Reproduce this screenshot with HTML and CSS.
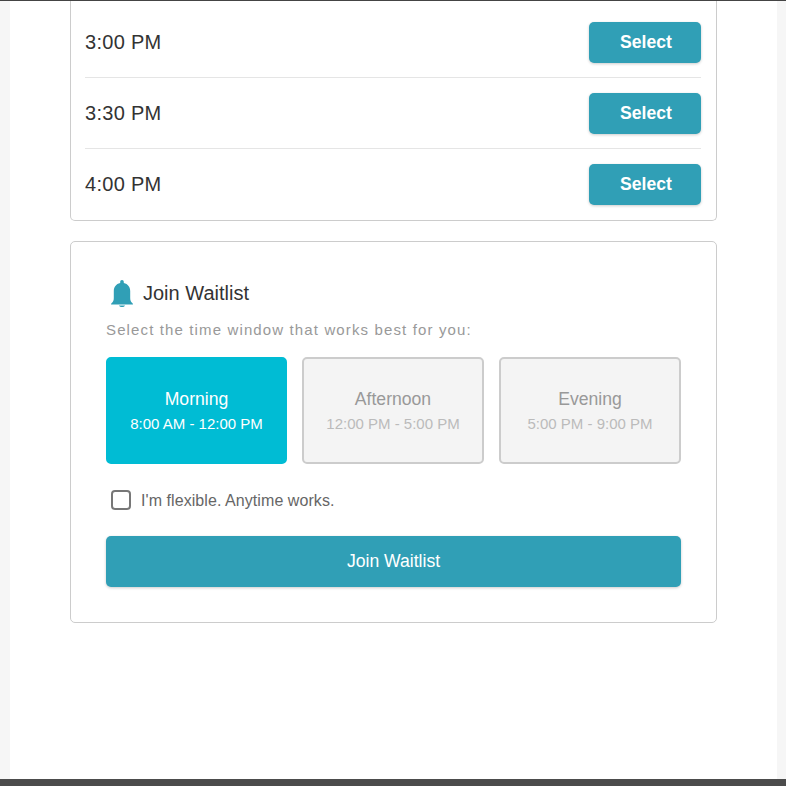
FILE: index.html
```html
<!DOCTYPE html>
<html lang="en">
<head>
    <meta charset="UTF-8">
    <meta name="viewport" content="width=device-width, initial-scale=1.0">
    <title>Join Waitlist</title>
    <link rel="stylesheet" href="styles.css">
</head>
<body>
    <div class="page">
        <main class="content">
            <section class="card card-times">
                <div class="slot">
                    <span class="slot-time">3:00 PM</span>
                    <button class="btn-select">Select</button>
                </div>
                <div class="slot">
                    <span class="slot-time">3:30 PM</span>
                    <button class="btn-select">Select</button>
                </div>
                <div class="slot">
                    <span class="slot-time">4:00 PM</span>
                    <button class="btn-select">Select</button>
                </div>
            </section>

            <section class="card card-waitlist">
                <h2 class="waitlist-title">
                    <svg class="bell" viewBox="0 0 22 27" aria-hidden="true">
                        <path d="M11 0C9.800 0 9.200.8 9.200 2v1C5 4 2.800 7 2.800 11v7c0 2.500-.8 3.800-1.800 4.800-.6.500-1 1.200-1 1.700h22c0-.5-.4-1.200-1-1.700-1-1-1.800-2.300-1.800-4.800v-7c0-4-2.200-7-6.400-8V2c0-1.200-.6-2-1.800-2z"/>
                        <path d="M8 25.500h6c0 .9-1.300 1.500-3 1.500s-3-.6-3-1.500z"/>
                    </svg>
                    Join Waitlist
                </h2>
                <p class="waitlist-hint">Select the time window that works best for you:</p>

                <div class="windows">
                    <div class="window active">
                        <div class="window-name">Morning</div>
                        <div class="window-hours">8:00 AM - 12:00 PM</div>
                    </div>
                    <div class="window">
                        <div class="window-name">Afternoon</div>
                        <div class="window-hours">12:00 PM - 5:00 PM</div>
                    </div>
                    <div class="window">
                        <div class="window-name">Evening</div>
                        <div class="window-hours">5:00 PM - 9:00 PM</div>
                    </div>
                </div>

                <label class="flexible">
                    <input type="checkbox" class="flexible-box">
                    <span class="flexible-text">I'm flexible. Anytime works.</span>
                </label>

                <button class="btn-join">Join Waitlist</button>
            </section>
        </main>
        <div class="bottom-bar"></div>
    </div>
</body>
</html>
```

FILE: styles.css
```css
* {
    box-sizing: border-box;
}

body {
    margin: 0;
    padding: 0;
    background-color: #f6f6f6;
    font-family: 'Liberation Sans', Arial, sans-serif;
    color: #333;
}

.page {
    height: 786px;
    display: flex;
    flex-direction: column;
    border-top: 1px solid #444;
    overflow: hidden;
}

.content {
    flex: 1;
    margin: 0 9px 0 10px;
    padding: 0 60px;
    background-color: #fff;
}

.bottom-bar {
    height: 7px;
    background-color: #4c4c4c;
}

.card {
    border: 1px solid #ccc;
    border-radius: 5px;
    background-color: #fff;
}

/* top of this card is scrolled out of the window */
.card-times {
    border-top: none;
    border-radius: 0 0 5px 5px;
    padding: 0 15px 0 14px;
    margin-bottom: 20px;
}

.slot {
    display: flex;
    justify-content: space-between;
    align-items: center;
    padding: 15px 0 14px;
    border-bottom: 1px solid #e5e5e5;
}

.slot:first-child {
    padding-top: 21px;
}

.slot:last-child {
    padding-bottom: 15px;
    border-bottom: none;
}

.slot-time {
    font-size: 20px;
    letter-spacing: 0.3px;
}

.btn-select {
    width: 112px;
    height: 41px;
    padding: 0 0 0 2px;
    border: none;
    border-radius: 5px;
    background-color: #309fb6;
    color: #fff;
    font-family: inherit;
    font-size: 17.6px;
    font-weight: bold;
    box-shadow: 0 1px 3px rgba(0, 0, 0, 0.2);
}

.card-waitlist {
    height: 382px;
    padding: 36px 35px 0;
}

.waitlist-title {
    display: flex;
    align-items: center;
    gap: 10px;
    margin: 0 0 13px 5px;
    font-size: 20px;
    font-weight: normal;
    line-height: 30px;
}

.bell {
    width: 22px;
    height: 27px;
    fill: #309fb6;
}

.waitlist-hint {
    margin: 0 0 19px;
    font-size: 15px;
    line-height: 17px;
    letter-spacing: 1.13px;
    color: #999;
}

.windows {
    display: grid;
    grid-template-columns: 181px 182px 182px;
    gap: 15px;
}

.window {
    height: 107px;
    display: flex;
    flex-direction: column;
    justify-content: center;
    align-items: center;
    border: 2px solid #ccc;
    border-radius: 5px;
    background-color: #f4f4f4;
    color: #999;
}

.window.active {
    border-color: #00bcd4;
    background-color: #00bcd4;
    color: #fff;
}

.window-name {
    font-size: 17.6px;
    margin-bottom: 5px;
}

.window-hours {
    font-size: 15px;
    color: #bbb;
}

.window.active .window-hours {
    color: #fff;
}

.flexible {
    display: flex;
    align-items: center;
    gap: 10px;
    height: 20px;
    margin: 26px 0 26px 5px;
    font-size: 16px;
    line-height: 20px;
    color: #666;
}

.flexible-text {
    padding-top: 2px;
    letter-spacing: 0.07px;
}

.flexible-box {
    appearance: none;
    width: 20px;
    height: 20px;
    margin: 0;
    border: 2px solid #777;
    border-radius: 4px;
    background-color: #fff;
}

.btn-join {
    display: block;
    width: 100%;
    height: 51px;
    border: none;
    border-radius: 5px;
    background-color: #309fb6;
    color: #fff;
    font-family: inherit;
    font-size: 17.6px;
    box-shadow: 0 1px 3px rgba(0, 0, 0, 0.2);
}
```
